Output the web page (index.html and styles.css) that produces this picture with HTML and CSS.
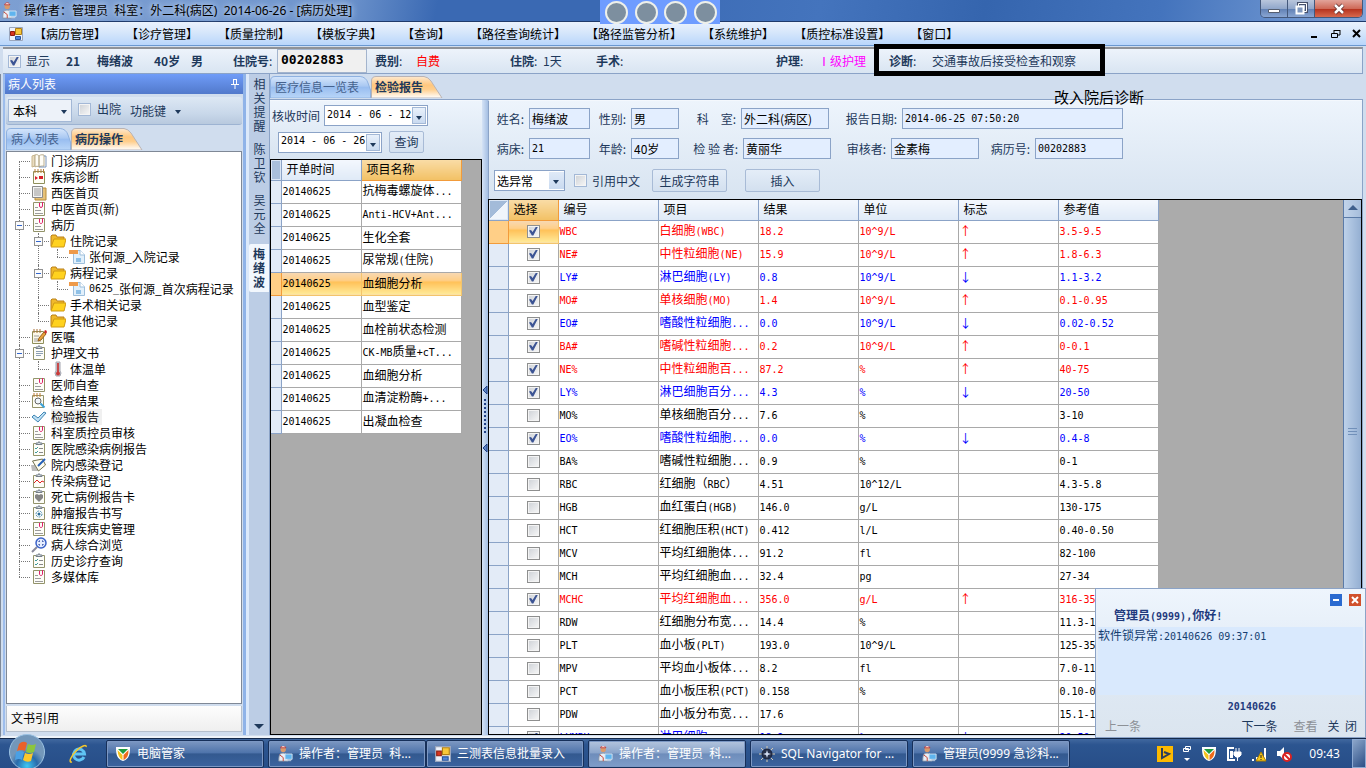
FILE: index.html
```html
<!DOCTYPE html>
<html lang="zh-CN">
<head>
    <meta charset="UTF-8">
    <meta name="viewport" content="width=device-width, initial-scale=1.0">
    <title>病历处理</title>
    <link rel="stylesheet" href="styles.css">
</head>
<body>
    <!-- 图标定义 -->
    <svg class="defs" aria-hidden="true">
        <symbol id="i-book" viewBox="0 0 16 16">
            <path d="M1 3l3-1v11l-3 1z" fill="#e9dcc0" stroke="#c9b68c"/><path d="M4 2c2-1 3 0 4 1v11c-1-1-3-1-4 0zM8 3c2-2 4-1 5-1v11c-2 0-4 0-5 1z" fill="#fffdf6" stroke="#b9ac8c"/><path d="M13 3h2v11H8" fill="none" stroke="#7a94b8"/>
        </symbol>
        <symbol id="i-note" viewBox="0 0 16 16">
            <path d="M2.500 2.500h11v12h-11z" fill="#fdfdf4" stroke="#8f8f5a"/><path d="M4 0v4M7 0v4M10 0v4M12.500 0v4" stroke="#b87a33"/><path d="M4 7l3 2-3 2zM8 7h4v3H8z" fill="#d8202a"/>
        </symbol>
        <symbol id="i-papers" viewBox="0 0 16 16">
            <path d="M4 3h11v12H4z" fill="#e6c27a" stroke="#b88d3a"/><path d="M1.500 1.500h10v11h-10z" fill="#f3f3f3" stroke="#8a8a8a"/><path d="M3 4h7M3 6h7M3 8h7M3 10h7" stroke="#9a9a9a"/>
        </symbol>
        <symbol id="i-doc" viewBox="0 0 16 16">
            <path d="M2.500 1.500h11v13h-11z" fill="#fdfdf8" stroke="#93936a"/><path d="M4 6.500h3M4 9.500h6M4 12.500h8" stroke="#9c9c9c"/><path d="M8.500 2v3c0 2 3 2 3 0V1" fill="none" stroke="#e0206c"/>
        </symbol>
        <symbol id="i-folder" viewBox="0 0 16 16">
            <path d="M1 13V3l1-1h4l1 2h7v3" fill="#f0b92c" stroke="#b9801a"/><path d="M1 14L4 6h12l-2 8z" fill="#ffd21f" stroke="#d09a14"/>
        </symbol>
        <symbol id="i-file" viewBox="0 0 16 16">
            <path d="M4.500 1.500h7l4 4v9h-11z" fill="#e2f0fb" stroke="#9dbedb"/><path d="M11 1v5h5" fill="#fff" stroke="#9dbedb"/><path d="M0 1h9v4H0z" fill="#ee9a4a"/><path d="M7 9h5v4H7z" fill="#8fc0e6"/>
        </symbol>
        <symbol id="i-pencil" viewBox="0 0 16 16">
            <path d="M1.500 2.500h11v12h-11z" fill="#fbf8e8" stroke="#8f8f5a"/><path d="M3 0v4M6 0v4M9 0v4" stroke="#a96f35"/><path d="M3 7h5M3 10h4M3 12h7" stroke="#9c9c9c"/><path d="M7 12l1-3 5-6 2 2-5 6z" fill="#e9a23c" stroke="#9b6420"/><path d="M13 2l2-1 1 2-1 2z" fill="#cc2222"/>
        </symbol>
        <symbol id="i-clip" viewBox="0 0 16 16">
            <path d="M2.500 2.500h11v12h-11z" fill="#fdfdf8" stroke="#93936a"/><path d="M5 3.500V2h2l1-1.500L9 2h2v1.500z" fill="#d5dde5" stroke="#77808a"/>
        </symbol>
        <symbol id="i-clip-text" viewBox="0 0 16 16">
            <use href="#i-clip"/><path d="M5 6.500h7M5 8.500h7M5 10.500h5" stroke="#8d9fb4"/>
        </symbol>
        <symbol id="i-clip-list" viewBox="0 0 16 16">
            <use href="#i-clip"/><path d="M4 7l1 1 2-2M4 11l1 1 2-2" fill="none" stroke="#3f9a9a"/><path d="M8 7.500h4M8 11.500h4" stroke="#888"/>
        </symbol>
        <symbol id="i-clip-chart" viewBox="0 0 16 16">
            <use href="#i-clip"/><path d="M3 10l3-3 3 3 2-2 2 1" fill="none" stroke="#e02020"/>
        </symbol>
        <symbol id="i-clip-heart" viewBox="0 0 16 16">
            <use href="#i-clip"/><path d="M4 6l2-1 2 1 2-1 2 1v3l-4 4-4-4z" fill="#858585"/>
        </symbol>
        <symbol id="i-clip-cell" viewBox="0 0 16 16">
            <use href="#i-clip"/><circle cx="8" cy="9" r="3" fill="#fff" stroke="#4b8eb0" stroke-dasharray="2 1"/><circle cx="8" cy="9" r="1.500" fill="#2b6e98"/>
        </symbol>
        <symbol id="i-thermo" viewBox="0 0 16 16">
            <path d="M6 1h4v9l1 2-1 3H6l-1-3 1-2z" fill="#c9cbd2" stroke="#a3a5b0"/><path d="M8 2v9" stroke="#c84a4a" stroke-width="2"/><circle cx="8" cy="12.500" r="2" fill="#c83a3a"/>
        </symbol>
        <symbol id="i-search" viewBox="0 0 16 16">
            <path d="M1.500 2.500h11v12h-11z" fill="#fdfdf4" stroke="#93936a"/><path d="M3 0v4M6 0v4M9 0v4" stroke="#c07a2a"/><circle cx="7" cy="8" r="3" fill="#f0f6fa" stroke="#666"/><path d="M9.500 10.500l4 4" stroke="#3aa0d8" stroke-width="2"/>
        </symbol>
        <symbol id="i-tick" viewBox="0 0 16 16">
            <path d="M1 8l2-2 4 3 6-6 2 1-8 9z" fill="#bfe0f4" stroke="#3f86b4"/>
        </symbol>
        <symbol id="i-sign" viewBox="0 0 16 16">
            <path d="M0 8h4l3 6H1z" fill="#bbb"/><path d="M1.500 4l10-2 3 6-7 6z" fill="#fffdf0" stroke="#6f6f4f"/><path d="M7 9l7-7" stroke="#2560b8" stroke-width="2"/>
        </symbol>
        <symbol id="i-zoom" viewBox="0 0 16 16">
            <path d="M1 15l5-5" stroke="#8a8a9a" stroke-width="2"/><circle cx="10" cy="6" r="5" fill="#e6eeff" stroke="#3a62c8" stroke-width="1.500"/><path d="M8 5V4h1M11 4h1v1M12 7v1h-1M9 8H8V7" fill="none" stroke="#223f9a"/>
        </symbol>
        <symbol id="i-form" viewBox="0 0 14 14">
            <path d="M.5.5h13v13H.5z" fill="#eef2fa" stroke="#9aa6bd"/><path d="M1.500 4.500h4v4h-4z" fill="#d8341e" stroke="#8e1c10"/><path d="M6.500 1.500h6v6h-6z" fill="#f8c73a" stroke="#b07f14"/><path d="M6.500 9.500h5v3h-5z" fill="#4f86dc" stroke="#2b559c"/>
        </symbol>
        <symbol id="i-nurse" viewBox="0 0 18 18">
            <circle cx="7" cy="4" r="3" fill="#d99a6c"/><path d="M4 2c1-3 5-3 6 0z" fill="#fff" stroke="#b33"/><path d="M2 17c0-7 1-9 5-9s5 3 5 9z" fill="#e8eef6" stroke="#8492a6"/><path d="M3 10l4 3v4" fill="none" stroke="#c63a2b"/><path d="M9 9h8v6H9z" fill="#5fb4ee" stroke="#d6e6f4"/><path d="M11 16.500h5" stroke="#cfdbe8"/>
        </symbol>
        <symbol id="i-shield" viewBox="0 0 16 16">
            <path d="M1 1h14c0 8-1 12-7 14C2 13 1 9 1 1z" fill="#fff"/><path d="M3 3h10l-5 5z" fill="#1f9c3c"/><path d="M2.500 4l5 5v5C4 12 3 9 2.500 4z" fill="#f6c21c"/><path d="M13.500 4l-5 5v5c4-2 5-5 5-10z" fill="#ef6a1a"/>
        </symbol>
        <symbol id="i-gear" viewBox="0 0 16 16">
            <path d="M8 0v16M0 8h16M2 2l12 12M14 2L2 14" stroke="#d8cbb0"/><circle cx="8" cy="8" r="5" fill="#26304a" stroke="#17203a"/><path d="M8 4l1 3 3 1-3 1-1 3-1-3-3-1 3-1z" fill="#cfdaf0"/>
        </symbol>
    </svg>

    <header class="titlebar">
        <svg class="icon18"><use href="#i-nurse"/></svg>
        <h1>操作者：管理员  科室：外二科(病区)  2014-06-26 - [病历处理]</h1>
        <div class="dots"><i></i><i></i><i></i><i></i></div>
        <div class="win-buttons">
            <button aria-label="最小化"><svg width="14" height="12"><path d="M1.500 6.500h11v3h-11z" fill="#fff" stroke="#555e70"/></svg></button>
            <button aria-label="还原"><svg width="14" height="14"><path d="M4.500 1.500h8v8h-8z" fill="none" stroke="#46506a" stroke-width="3"/><path d="M4.500 1.500h8v8h-8z" fill="none" stroke="#fff"/><path d="M2.500 4.500h7v7h-7z" fill="#7f97bd" stroke="#fff" stroke-width="2"/></svg></button>
            <button class="close" aria-label="关闭"><svg width="14" height="12"><path d="M3 2l8 8M11 2l-8 8" stroke="#5c2a2a" stroke-width="4"/><path d="M3 2l8 8M11 2l-8 8" stroke="#fff" stroke-width="2.500"/></svg></button>
        </div>
    </header>

    <nav class="menubar">
        <svg class="icon14"><use href="#i-form"/></svg>
        <a href="#">【病历管理】</a>
        <a href="#">【诊疗管理】</a>
        <a href="#">【质量控制】</a>
        <a href="#">【模板字典】</a>
        <a href="#">【查询】</a>
        <a href="#">【路径查询统计】</a>
        <a href="#">【路径监管分析】</a>
        <a href="#">【系统维护】</a>
        <a href="#">【质控标准设置】</a>
        <a href="#">【窗口】</a>
        <div class="mdi">
            <svg width="10" height="10"><path d="M1 8h6" stroke="#000" stroke-width="2"/></svg>
            <svg width="10" height="10"><path d="M3 1.500h6M3 1v3M9 1v5H7M.500 4.500h6v4h-6z" fill="none" stroke="#000"/></svg>
            <svg width="10" height="10"><path d="M1 1l7 7M8 1L1 8" stroke="#000" stroke-width="2"/></svg>
        </div>
    </nav>

    <section class="patient-bar">
        <label class="check"><input type="checkbox" checked>显示</label>
        <b>21</b>
        <b>梅绪波</b>
        <b>40岁</b>
        <b>男</b>
        <label for="admNo"><b>住院号</b>:</label>
        <input id="admNo" class="adm-no" type="text" value="00202883">
        <span class="cost"><b>费别</b>:</span>
        <span class="red">自费</span>
        <span><b>住院</b>:</span>
        <span>1天</span>
        <span><b>手术</b>:</span>
        <span><b>护理</b>:</span>
        <span class="pink">Ⅰ级护理</span>
        <span><b>诊断</b>:</span>
        <span>交通事故后接受检查和观察</span>
        <div class="mark-box"></div>
        <div class="mark-text">改入院后诊断</div>
    </section>

    <main class="workspace">
        <aside class="side">
            <div class="side-title">病人列表
                <svg width="10" height="12"><path d="M3.500 1v5M6.500 1v5M3 1.500h4M1 6.500h8M5 7v4" fill="none" stroke="#fff"/></svg>
            </div>
            <div class="side-tools">
                <select aria-label="科室范围"><option>本科</option></select>
                <label class="check"><input type="checkbox">出院</label>
                <button class="fn">功能键<i class="caret"></i></button>
            </div>
            <div class="tabs">
                <button class="tab t1"><svg viewBox="0 0 66 22" preserveAspectRatio="none"><path d="M.5 22V5Q.5.500 5 .500H55Q61 1 63 7L65.500 14V22z" fill="url(#gBlue)" stroke="#8db0e0"/></svg><span>病人列表</span></button>
                <button class="tab active"><svg viewBox="0 0 74 22" preserveAspectRatio="none"><path d="M.5 22V5Q.5.500 5 .500H53Q57 1 60 5L71 22z" fill="url(#gGold)" stroke="#b9b3b4"/></svg><span>病历操作</span></button>
            </div>
            <div class="tree">
                <ul>
                    <li><div class="node"><svg><use href="#i-book"/></svg>门诊病历</div></li>
                    <li><div class="node"><svg><use href="#i-note"/></svg>疾病诊断</div></li>
                    <li><div class="node"><svg><use href="#i-papers"/></svg>西医首页</div></li>
                    <li><div class="node"><svg><use href="#i-doc"/></svg>中医首页(新)</div></li>
                    <li>
                        <div class="node"><button class="fold" aria-label="折叠"></button><svg><use href="#i-doc"/></svg>病历</div>
                        <ul>
                            <li>
                                <div class="node"><button class="fold" aria-label="折叠"></button><svg><use href="#i-folder"/></svg>住院记录</div>
                                <ul><li><div class="node"><svg><use href="#i-file"/></svg>张何源_入院记录</div></li></ul>
                            </li>
                            <li>
                                <div class="node"><button class="fold" aria-label="折叠"></button><svg><use href="#i-folder"/></svg>病程记录</div>
                                <ul><li><div class="node"><svg><use href="#i-file"/></svg><small>0625_</small>张何源_首次病程记录</div></li></ul>
                            </li>
                            <li><div class="node"><svg><use href="#i-folder"/></svg>手术相关记录</div></li>
                            <li><div class="node"><svg><use href="#i-folder"/></svg>其他记录</div></li>
                        </ul>
                    </li>
                    <li><div class="node"><svg><use href="#i-pencil"/></svg>医嘱</div></li>
                    <li>
                        <div class="node"><button class="fold" aria-label="折叠"></button><svg><use href="#i-clip-text"/></svg>护理文书</div>
                        <ul><li><div class="node"><svg><use href="#i-thermo"/></svg>体温单</div></li></ul>
                    </li>
                    <li><div class="node"><svg><use href="#i-doc"/></svg>医师自查</div></li>
                    <li><div class="node"><svg><use href="#i-search"/></svg>检查结果</div></li>
                    <li><div class="node"><svg><use href="#i-tick"/></svg><span class="current">检验报告</span></div></li>
                    <li><div class="node"><svg><use href="#i-doc"/></svg>科室质控员审核</div></li>
                    <li><div class="node"><svg><use href="#i-clip-list"/></svg>医院感染病例报告</div></li>
                    <li><div class="node"><svg><use href="#i-sign"/></svg>院内感染登记</div></li>
                    <li><div class="node"><svg><use href="#i-clip-chart"/></svg>传染病登记</div></li>
                    <li><div class="node"><svg><use href="#i-clip-heart"/></svg>死亡病例报告卡</div></li>
                    <li><div class="node"><svg><use href="#i-clip-cell"/></svg>肿瘤报告书写</div></li>
                    <li><div class="node"><svg><use href="#i-doc"/></svg>既往疾病史管理</div></li>
                    <li><div class="node"><svg><use href="#i-zoom"/></svg>病人综合浏览</div></li>
                    <li><div class="node"><svg><use href="#i-clip-list"/></svg>历史诊疗查询</div></li>
                    <li><div class="node"><svg><use href="#i-doc"/></svg>多媒体库</div></li>
                </ul>
            </div>
            <div class="side-foot">文书引用</div>
        </aside>

        <div class="vtabs">
            <button>相关提醒</button>
            <button>陈卫钦</button>
            <button>吴元全</button>
            <button class="active">梅绪波</button>
            <i class="caret big"></i>
        </div>

        <section class="content">
            <div class="tabs">
                <button class="tab t2"><svg viewBox="0 0 102 22" preserveAspectRatio="none"><path d="M.5 22V5Q.5.500 5 .500H91Q97 1 99 7L101.500 14V22z" fill="url(#gBlue)" stroke="#8db0e0"/></svg><span>医疗信息一览表</span></button>
                <button class="tab active"><svg viewBox="0 0 74 22" preserveAspectRatio="none"><path d="M.5 22V5Q.5.500 5 .500H53Q57 1 60 5L71 22z" fill="url(#gGold)" stroke="#b9b3b4"/></svg><span>检验报告</span></button>
            </div>
            <div class="split">
                <div class="orders">
                    <form class="query">
                        <label for="d1">核收时间</label>
                        <span class="date"><input id="d1" type="text" value="2014 - 06 - 12"><button type="button" aria-label="选择日期"><i class="caret"></i></button></span>
                        <span class="date second"><input aria-label="截止时间" type="text" value="2014 - 06 - 26"><button type="button" aria-label="选择日期"><i class="caret"></i></button></span>
                        <button type="button" class="btn">查询</button>
                    </form>
                    <div class="grid-box">
                        <table class="grid order-grid">
                            <colgroup><col class="g1"><col class="c-date"><col class="c100"></colgroup>
                            <thead><tr><th class="corner"></th><th>开单时间</th><th class="hot">项目名称</th></tr></thead>
                            <tbody>
                                <tr><th></th><td><small>20140625</small></td><td>抗梅毒螺旋体<small>...</small></td></tr>
                                <tr><th></th><td><small>20140625</small></td><td><small>Anti-HCV+Ant...</small></td></tr>
                                <tr><th></th><td><small>20140625</small></td><td>生化全套</td></tr>
                                <tr><th></th><td><small>20140625</small></td><td>尿常规<small>(</small>住院<small>)</small></td></tr>
                                <tr class="selected"><th></th><td><small>20140625</small></td><td>血细胞分析</td></tr>
                                <tr><th></th><td><small>20140625</small></td><td>血型鉴定</td></tr>
                                <tr><th></th><td><small>20140625</small></td><td>血栓前状态检测</td></tr>
                                <tr><th></th><td><small>20140625</small></td><td><small>CK-MB</small>质量<small>+cT...</small></td></tr>
                                <tr><th></th><td><small>20140625</small></td><td>血细胞分析</td></tr>
                                <tr><th></th><td><small>20140625</small></td><td>血清淀粉酶<small>+...</small></td></tr>
                                <tr><th></th><td><small>20140625</small></td><td>出凝血检查</td></tr>
                            </tbody>
                        </table>
                    </div>
                </div>

                <div class="splitter"><svg width="6" height="70"><path d="M5 3L1 7l4 4zM5 61l-4 4 4 4z" fill="#5f86c6" stroke="#1f3f86"/><path d="M3 16v36" stroke="#1f3f86" stroke-width="2" stroke-dasharray="2 2"/></svg></div>

                <div class="report">
                    <form class="info">
                        <div class="row row1">
                            <label for="f1">姓名:</label><input id="f1" type="text" value="梅绪波">
                            <label for="f2">性别:</label><input id="f2" type="text" value="男">
                            <label for="f3">科　室:</label><input id="f3" type="text" value="外二科(病区)">
                            <label for="f4">报告日期:</label><input id="f4" class="num" type="text" value="2014-06-25 07:50:20">
                        </div>
                        <div class="row row2">
                            <label for="f5">病床:</label><input id="f5" class="num" type="text" value="21">
                            <label for="f6">年龄:</label><input id="f6" type="text" value="40岁">
                            <label for="f7">检 验 者:</label><input id="f7" type="text" value="黄丽华">
                            <label for="f8">审核者:</label><input id="f8" type="text" value="金素梅">
                            <label for="f9">病历号:</label><input id="f9" class="num" type="text" value="00202883">
                        </div>
                        <div class="row row3">
                            <select aria-label="选择方式"><option>选异常</option></select>
                            <label class="check"><input type="checkbox">引用中文</label>
                            <button type="button" class="btn wide">生成字符串</button>
                            <button type="button" class="btn wide">插入</button>
                        </div>
                    </form>
                    <div class="grid-box">
                        <table class="grid">
                            <colgroup><col class="g2"><col class="c-sel"><col class="c100"><col class="c100"><col class="c100"><col class="c100"><col class="c100"><col class="c100"></colgroup>
                            <thead><tr><th class="corner all"></th><th class="hot">选择</th><th>编号</th><th>项目</th><th>结果</th><th>单位</th><th>标志</th><th>参考值</th></tr></thead>
                            <tbody>
                                <tr class="high first"><th></th><td><input type="checkbox" aria-label="WBC" checked></td><td><small>WBC</small></td><td>白细胞<small>(WBC)</small></td><td><small>18.2</small></td><td><small>10^9/L</small></td><td>↑</td><td><small>3.5-9.5</small></td></tr>
                                <tr class="high"><th></th><td><input type="checkbox" aria-label="NE#" checked></td><td><small>NE#</small></td><td>中性粒细胞<small>(NE)</small></td><td><small>15.9</small></td><td><small>10^9/L</small></td><td>↑</td><td><small>1.8-6.3</small></td></tr>
                                <tr class="low"><th></th><td><input type="checkbox" aria-label="LY#" checked></td><td><small>LY#</small></td><td>淋巴细胞<small>(LY)</small></td><td><small>0.8</small></td><td><small>10^9/L</small></td><td>↓</td><td><small>1.1-3.2</small></td></tr>
                                <tr class="high"><th></th><td><input type="checkbox" aria-label="MO#" checked></td><td><small>MO#</small></td><td>单核细胞<small>(MO)</small></td><td><small>1.4</small></td><td><small>10^9/L</small></td><td>↑</td><td><small>0.1-0.95</small></td></tr>
                                <tr class="low"><th></th><td><input type="checkbox" aria-label="EO#" checked></td><td><small>EO#</small></td><td>嗜酸性粒细胞<small>...</small></td><td><small>0.0</small></td><td><small>10^9/L</small></td><td>↓</td><td><small>0.02-0.52</small></td></tr>
                                <tr class="high"><th></th><td><input type="checkbox" aria-label="BA#" checked></td><td><small>BA#</small></td><td>嗜碱性粒细胞<small>...</small></td><td><small>0.2</small></td><td><small>10^9/L</small></td><td>↑</td><td><small>0-0.1</small></td></tr>
                                <tr class="high"><th></th><td><input type="checkbox" aria-label="NE%" checked></td><td><small>NE%</small></td><td>中性粒细胞百<small>...</small></td><td><small>87.2</small></td><td><small>%</small></td><td>↑</td><td><small>40-75</small></td></tr>
                                <tr class="low"><th></th><td><input type="checkbox" aria-label="LY%" checked></td><td><small>LY%</small></td><td>淋巴细胞百分<small>...</small></td><td><small>4.3</small></td><td><small>%</small></td><td>↓</td><td><small>20-50</small></td></tr>
                                <tr><th></th><td><input type="checkbox" aria-label="MO%"></td><td><small>MO%</small></td><td>单核细胞百分<small>...</small></td><td><small>7.6</small></td><td><small>%</small></td><td></td><td><small>3-10</small></td></tr>
                                <tr class="low"><th></th><td><input type="checkbox" aria-label="EO%" checked></td><td><small>EO%</small></td><td>嗜酸性粒细胞<small>...</small></td><td><small>0.0</small></td><td><small>%</small></td><td>↓</td><td><small>0.4-8</small></td></tr>
                                <tr><th></th><td><input type="checkbox" aria-label="BA%"></td><td><small>BA%</small></td><td>嗜碱性粒细胞<small>...</small></td><td><small>0.9</small></td><td><small>%</small></td><td></td><td><small>0-1</small></td></tr>
                                <tr><th></th><td><input type="checkbox" aria-label="RBC"></td><td><small>RBC</small></td><td>红细胞（<small>RBC</small>）</td><td><small>4.51</small></td><td><small>10^12/L</small></td><td></td><td><small>4.3-5.8</small></td></tr>
                                <tr><th></th><td><input type="checkbox" aria-label="HGB"></td><td><small>HGB</small></td><td>血红蛋白<small>(HGB)</small></td><td><small>146.0</small></td><td><small>g/L</small></td><td></td><td><small>130-175</small></td></tr>
                                <tr><th></th><td><input type="checkbox" aria-label="HCT"></td><td><small>HCT</small></td><td>红细胞压积<small>(HCT)</small></td><td><small>0.412</small></td><td><small>l/L</small></td><td></td><td><small>0.40-0.50</small></td></tr>
                                <tr><th></th><td><input type="checkbox" aria-label="MCV"></td><td><small>MCV</small></td><td>平均红细胞体<small>...</small></td><td><small>91.2</small></td><td><small>fl</small></td><td></td><td><small>82-100</small></td></tr>
                                <tr><th></th><td><input type="checkbox" aria-label="MCH"></td><td><small>MCH</small></td><td>平均红细胞血<small>...</small></td><td><small>32.4</small></td><td><small>pg</small></td><td></td><td><small>27-34</small></td></tr>
                                <tr class="high"><th></th><td><input type="checkbox" aria-label="MCHC" checked></td><td><small>MCHC</small></td><td>平均红细胞血<small>...</small></td><td><small>356.0</small></td><td><small>g/L</small></td><td>↑</td><td><small>316-354</small></td></tr>
                                <tr><th></th><td><input type="checkbox" aria-label="RDW"></td><td><small>RDW</small></td><td>红细胞分布宽<small>...</small></td><td><small>14.4</small></td><td><small>%</small></td><td></td><td><small>11.3-14.7</small></td></tr>
                                <tr><th></th><td><input type="checkbox" aria-label="PLT"></td><td><small>PLT</small></td><td>血小板<small>(PLT)</small></td><td><small>193.0</small></td><td><small>10^9/L</small></td><td></td><td><small>125-350</small></td></tr>
                                <tr><th></th><td><input type="checkbox" aria-label="MPV"></td><td><small>MPV</small></td><td>平均血小板体<small>...</small></td><td><small>8.2</small></td><td><small>fl</small></td><td></td><td><small>7.0-11.0</small></td></tr>
                                <tr><th></th><td><input type="checkbox" aria-label="PCT"></td><td><small>PCT</small></td><td>血小板压积<small>(PCT)</small></td><td><small>0.158</small></td><td><small>%</small></td><td></td><td><small>0.10-0.28</small></td></tr>
                                <tr><th></th><td><input type="checkbox" aria-label="PDW"></td><td><small>PDW</small></td><td>血小板分布宽<small>...</small></td><td><small>17.6</small></td><td></td><td></td><td><small>15.1-18.1</small></td></tr>
                                <tr class="low"><th></th><td><input type="checkbox" aria-label="LYMPH" checked></td><td><small>LYMPH</small></td><td>淋巴细胞<small>...</small></td><td><small>18.2</small></td><td><small>%</small></td><td>↓</td><td><small>20-50</small></td></tr>
                            </tbody>
                        </table>
                        <div class="scroll"><i class="up"></i><div class="thumb"></div></div>
                    </div>
                </div>
            </div>
        </section>
    </main>

    <footer class="taskbar">
        <button class="start" aria-label="开始"><svg width="38" height="38" viewBox="0 0 38 38"><circle cx="19" cy="19" r="17.500" fill="url(#gOrb)" stroke="#9cc3e4"/><path d="M11 11q4-4 8-1l-2 8q-4-2-8 0z" fill="#e9622a"/><path d="M20 11q4 2 8 0l-2 8q-4 2-8 0z" fill="#8cc63e"/><path d="M8 19q4-2 8 0l-2 8q-3-2-7 0z" fill="#4aa0e4"/><path d="M17 20q4 2 8 0l-2 8q-4 2-8-1z" fill="#fcc72c"/></svg></button>
        <button class="ie" aria-label="浏览器"><svg width="22" height="22" viewBox="0 0 22 22"><path d="M16 14a5.500 5.500 0 1 1 .5-3H7" fill="none" stroke="#5fc4f4" stroke-width="3"/><path d="M4 19c-4 1-1-6 4-11s11-7 10-4" fill="none" stroke="#f6c82a" stroke-width="1.500"/></svg></button>
        <button class="task"><svg><use href="#i-shield"/></svg>电脑管家</button>
        <button class="task glued"><svg><use href="#i-nurse"/></svg>操作者：管理员  科...</button>
        <button class="task"><svg><use href="#i-form"/></svg>三测表信息批量录入</button>
        <button class="task on"><svg><use href="#i-nurse"/></svg>操作者：管理员  科...</button>
        <button class="task"><svg><use href="#i-gear"/></svg>SQL Navigator for ...</button>
        <button class="task"><svg><use href="#i-nurse"/></svg>管理员(9999 急诊科...</button>
        <div class="tray">
            <svg width="16" height="16"><path d="M0 0h16v16H0z" fill="#fcb900"/><path d="M5 2v10l7-4-5-2" fill="none" stroke="#2b3d5c" stroke-width="2"/></svg>
            <svg width="10" height="18"><path d="M3.500 1.500h5v3h-5zM1.500 3.500h5v3h-5z" fill="#2c5590" stroke="#fff"/><path d="M2 13h6l-3 3z" fill="#fff"/></svg>
            <svg width="16" height="16"><use href="#i-shield"/></svg>
            <svg width="16" height="16" viewBox="0 0 16 16"><path d="M8 2H2v12h7" fill="none" stroke="#fff" stroke-width="2"/><path d="M4 5h3v7H4z" fill="#fff"/><path d="M8 6h7v3l-2 2h-3L8 9zM10 2v4M13 2v4M11.500 11v4" fill="#fff" stroke="#fff"/></svg>
            <svg width="16" height="16" viewBox="0 0 16 16"><path d="M1 15v-2h2v2zM5 15v-4h2v4zM9 15V7h2v8zM13 15V2h2v13z" fill="#fff"/><path d="M10 6l5 9H5z" fill="#f8c81c" stroke="#a67c00"/><path d="M10 9v3M10 13v1" stroke="#222"/></svg>
            <svg width="16" height="16" viewBox="0 0 16 16"><path d="M1 5h3l4-4v13l-4-4H1z" fill="#fff"/><circle cx="11" cy="11" r="4" fill="#fff" stroke="#d92222" stroke-width="2"/><path d="M8 8l6 6" stroke="#d92222" stroke-width="2"/></svg>
            <time>09:43</time>
            <i class="peek"></i>
        </div>
    </footer>

    <!-- 右下角消息提示 -->
    <aside class="notice">
        <div class="notice-head">
            <h2>管理员<small>(9999),</small>你好<small>!</small></h2>
            <button class="n-min" aria-label="最小化"></button>
            <button class="n-close" aria-label="关闭"><svg width="8" height="8"><path d="M1 1l6 6M7 1L1 7" stroke="#fff" stroke-width="2"/></svg></button>
        </div>
        <p class="notice-body">软件锁异常<small>:20140626 09:37:01</small></p>
        <strong><small>20140626</small></strong>
        <div class="notice-foot">
            <button disabled>上一条</button><button class="next">下一条</button><button disabled>查看</button><button>关&nbsp; 闭</button>
        </div>
    </aside>

    <svg class="defs" aria-hidden="true">
        <linearGradient id="gBlue" x2="0" y2="1"><stop offset="0" stop-color="#d6e6fb"/><stop offset=".45" stop-color="#a9c8f2"/><stop offset=".5" stop-color="#98bdf0"/><stop offset="1" stop-color="#b9d6f8"/></linearGradient>
        <linearGradient id="gGold" x2="0" y2="1"><stop offset="0" stop-color="#fde9d0"/><stop offset=".4" stop-color="#ffc77e"/><stop offset=".6" stop-color="#ffce8c"/><stop offset="1" stop-color="#fff"/></linearGradient>
        <radialGradient id="gOrb" cy=".9"><stop offset="0" stop-color="#3fc8f4"/><stop offset=".6" stop-color="#2a6bab"/><stop offset="1" stop-color="#7397ba"/></radialGradient>
    </svg>
</body>
</html>
```

FILE: styles.css
```css
* {
    box-sizing: border-box;
}
body {
    margin: 0;
    height: 100vh;
    display: flex;
    flex-direction: column;
    overflow: hidden;
    position: relative;
    font-family: "Noto Sans CJK SC", sans-serif;
    font-size: 12px;
    line-height: 16px;
    color: #1e395b;
    background-color: #d0ddee;
}
button, input, select {
    font: inherit;
    color: inherit;
    margin: 0;
    padding: 0;
    border: 0;
    border-radius: 0;
    background: none;
    outline: none;
}
h1, h2, p, ul {
    margin: 0;
    padding: 0;
    font-size: 12px;
}
svg {
    display: block;
    flex: none;
}
small, .num {
    font-family: "DejaVu Sans Mono", monospace;
    font-size: 10px;
}
.defs {
    position: absolute;
    width: 0;
    height: 0;
}
.red { color: #f00; }
.pink { color: #f0f; }
.caret {
    display: inline-block;
    border: 3px solid transparent;
    border-top: 4px solid #1e395b;
    border-bottom: 0;
}

/* 标题栏 */
.titlebar {
    flex: none;
    height: 22px;
    display: flex;
    align-items: center;
    padding-left: 1px;
    border-bottom: 1px solid #1f3a6b;
    background: linear-gradient(100deg, #7d9fd2, #6f95cd 25%, #3a69b3 32%, #3a69b3 45%, #4474bd 60%, #3565ae 72%, #4474bd 85%, #7fa3d8);
    position: relative;
}
.icon18 {
    width: 16px;
    height: 18px;
}
.titlebar h1 {
    margin-left: 7px;
    color: #000;
    font-family: "Noto Sans", "Noto Sans CJK SC", sans-serif;
    font-weight: normal;
    white-space: pre;
    text-shadow: 0 0 6px #c4d6f0, 0 0 6px #c4d6f0;
}
.dots {
    position: absolute;
    left: 600px;
    top: 0;
    z-index: 2;
    width: 120px;
    height: 24px;
    display: flex;
    justify-content: space-around;
    align-items: center;
    padding-left: 2px;
    background-color: #6e9cff;
}
.dots i {
    width: 23px;
    height: 23px;
    border-radius: 50%;
    border: 2px solid #eef0ea;
    background-color: #7d8f9f;
}
.win-buttons {
    margin-left: auto;
    margin-right: 3px;
    align-self: flex-start;
    display: flex;
    height: 18px;
    border: 1px solid #43587c;
    border-top: 0;
    border-radius: 0 0 5px 5px;
    overflow: hidden;
}
.win-buttons button {
    width: 27px;
    display: flex;
    align-items: center;
    justify-content: center;
    border-right: 1px solid #43587c;
    background: linear-gradient(#b9c6dc, #91a7cb 50%, #5f7fb3 51%, #8aa6d3);
}
.win-buttons .close {
    width: 47px;
    border: 0;
    background: linear-gradient(#e2a49a, #cf6a58 50%, #b3301c 51%, #d8694e);
}

/* 菜单 */
.menubar {
    flex: none;
    height: 24px;
    display: flex;
    align-items: center;
    padding: 0 4px 0 9px;
    border-bottom: 1px solid #6a98d0;
    background: linear-gradient(#eaf2fd, #d9e8fb 40%, #b9d6fb);
}
.icon14 {
    width: 14px;
    height: 14px;
    margin-right: 11px;
}
.menubar a {
    margin-right: 20px;
    color: #000;
    text-decoration: none;
}
.mdi {
    margin-left: auto;
    display: flex;
    gap: 11px;
}

/* 病人信息条 */
.patient-bar {
    flex: none;
    height: 27px;
    display: grid;
    grid-template-columns: 58px 31px 57px 37px 42px 44px 90px 49px 94px 33px 53px 180px 42px 71px 43px auto;
    align-items: center;
    margin: 1px 3px 0;
    padding: 3px 0 0 5px;
    position: relative;
    border-top: 2px solid #8f9297;
    border-bottom: 1px solid #8ba3c7;
    border-right: 1px solid #8ba3c7;
    background: linear-gradient(#edf3fb, #d9e5f2);
    white-space: nowrap;
}
.patient-bar > .cost {
    padding-left: 8px;
}
.patient-bar > * {
    margin-top: -3px;
}
.adm-no {
    width: 90px;
    height: 24px;
    padding: 0 0 3px 3px;
    border: 1px solid #a3b4cd;
    background-color: #f0f0f0;
    color: #000;
    font-family: "DejaVu Sans Mono", monospace;
    font-size: 13px;
    font-weight: bold;
}
.mark-box {
    position: absolute;
    left: 871px;
    top: -2px;
    z-index: 3;
    width: 231px;
    height: 32px;
    border: 5px solid #000;
}
.mark-text {
    position: absolute;
    left: 1051px;
    top: 43px;
    z-index: 3;
    color: #000;
    font-size: 15px;
}
.check {
    display: flex;
    align-items: center;
    gap: 5px;
}
input[type="checkbox"] {
    appearance: none;
    width: 13px;
    height: 13px;
    flex: none;
    position: relative;
    border: 1px solid #8e8f8f;
    background: linear-gradient(135deg, #cdd1d6, #f8f8f8);
    box-shadow: inset 0 0 0 1px #f4f4f4;
}
.check input[type="checkbox"] {
    border-color: #a3b8d6;
}
input[type="checkbox"]:checked::after {
    content: "";
    position: absolute;
    left: 1px;
    top: 1px;
    width: 9px;
    height: 9px;
    background-color: #3c5494;
    clip-path: polygon(0 45%, 22% 38%, 40% 62%, 78% 0, 100% 0, 48% 100%, 32% 100%);
}

/* 主工作区 */
.workspace {
    flex: 1;
    min-height: 0;
    display: flex;
    padding: 0 3px 1px 2px;
    border-left: 1px solid #7f8a9a;
    border-bottom: 2px solid #eef3f9;
}
.side {
    width: 243px;
    flex: none;
    display: flex;
    flex-direction: column;
    padding: 0 1px 3px;
    background-color: #d0ddee;
    border-right: 3px solid #8fb3e8;
    border-left: 2px solid #9dbdec;
}
.side-title {
    flex: none;
    height: 20px;
    display: flex;
    align-items: center;
    justify-content: space-between;
    margin: 0 -1px;
    padding: 0 3px;
    color: #fff;
    background: linear-gradient(#6f9cf8, #5179cb);
}
.side-tools {
    flex: none;
    height: 28px;
    display: flex;
    align-items: center;
    margin: 3px 0 1px;
    padding-left: 2px;
    border-radius: 3px;
    border-bottom: 1px solid #9db3d2;
    background: linear-gradient(#dde8f4, #c9d8ea 60%, #b8c9de);
}
select {
    appearance: none;
    color: #000;
    border: 1px solid #a3b8d6;
}
.side-tools select {
    width: 64px;
    height: 23px;
    padding-left: 4px;
    background: url("data:image/svg+xml,%3Csvg xmlns='http://www.w3.org/2000/svg' width='6' height='4'%3E%3Cpath d='M0 0h6L3 4z' fill='%231e395b'/%3E%3C/svg%3E") 52px 10px no-repeat #edf2f9;
}
.side-tools .check {
    margin: -3px 9px 0 6px;
    gap: 6px;
}
.fn .caret {
    margin: 0 0 2px 9px;
}
.tabs {
    flex: none;
    height: 24px;
    display: flex;
    align-items: flex-end;
}
.tab {
    position: relative;
    width: 74px;
    height: 22px;
    text-align: left;
    color: #45628e;
}
.tab svg {
    position: absolute;
    left: 0;
    top: 0;
    width: 100%;
    height: 100%;
}
.tab span {
    position: relative;
    padding-left: 5px;
}
.t1 { width: 65px; }
.t2 { width: 101px; }
.tab.active {
    color: #1e395b;
    font-weight: bold;
}
.tab.active span {
    padding-left: 4px;
}
.tree {
    flex: 1;
    min-height: 0;
    overflow: hidden;
    margin-top: 1px;
    padding-top: 1px;
    border: 1px solid #7f8896;
    background-color: #fff;
    color: #000;
}
.tree ul {
    list-style: none;
}
.tree li {
    position: relative;
}
.tree li > ul {
    margin-left: 19px;
}
.tree li::before {
    content: "";
    position: absolute;
    left: 12px;
    top: 0;
    height: 100%;
    border-left: 1px dotted #777;
}
.tree > ul > li:first-child::before {
    top: 8px;
    height: 8px;
}
.tree li:last-child::before {
    height: 8px;
}
.node {
    position: relative;
    height: 16px;
    display: flex;
    align-items: center;
    padding-left: 24px;
    white-space: nowrap;
}
.node::before {
    content: "";
    position: absolute;
    left: 12px;
    top: 8px;
    width: 11px;
    border-top: 1px dotted #777;
}
.node svg {
    width: 16px;
    height: 16px;
    margin-right: 4px;
}
.fold {
    position: absolute;
    left: 8px;
    top: 4px;
    width: 9px;
    height: 9px;
    border: 1px solid #919191;
    background: linear-gradient(#36c, #36c) center / 5px 1px no-repeat #fbfbfb;
}
.current {
    background-color: #f0f0f0;
    padding-right: 3px;
}
.side-foot {
    flex: none;
    height: 26px;
    margin-top: 2px;
    padding: 4px;
    color: #000;
    border: 1px solid #b5bfcc;
    border-top: 0;
    background: linear-gradient(#fdfdfd, #efefef);
}

/* 竖排页签 */
.vtabs {
    width: 24px;
    flex: none;
    display: flex;
    flex-direction: column;
    padding: 3px 2px 0 0;
    background: linear-gradient(90deg, #dce9fa 3px, #bccde5 3px);
    border-right: 1px solid #8ba3c7;
}
.vtabs button {
    width: 20px;
    margin: 0 0 9px 3px;
    padding: 0 3px 0 4px;
    line-height: 14px;
    word-break: break-all;
}
.vtabs .active {
    padding: 3px 4px;
    border-radius: 2px 0 0 2px;
    background-color: #f2f7fd;
    font-weight: bold;
}
.caret.big {
    margin: auto 0 6px 8px;
    width: 0;
    border-width: 5px 5px 0;
}

/* 右侧内容 */
.content {
    flex: 1;
    min-width: 0;
    display: flex;
    flex-direction: column;
}
.split {
    flex: 1;
    min-height: 0;
    display: flex;
    margin-top: 1px;
    border-top: 1px solid #8ba3c7;
    border-right: 1px solid #8ba3c7;
}
.orders {
    width: 212px;
    flex: none;
    display: flex;
    flex-direction: column;
}
.query {
    flex: none;
    height: 59px;
    display: flex;
    flex-wrap: wrap;
    align-content: flex-start;
    align-items: center;
    gap: 5px 4px;
    padding: 4px 0 0 2px;
    border-top: 1px solid #f4f8fd;
    background: linear-gradient(#edf4fc, #d8e4f1);
}
.date {
    width: 104px;
    height: 21px;
    display: flex;
    padding: 1px;
    border: 1px solid #8ba3c7;
    background-color: #fff;
}
.date.second {
    margin-left: 6px;
}
.date input {
    flex: 1;
    min-width: 0;
    padding: 0 0 2px 1px;
    color: #000;
    font-family: "DejaVu Sans Mono", monospace;
    font-size: 10px;
}
.date button {
    width: 14px;
    border: 1px solid #a3b8d6;
    background: linear-gradient(#e9f1fb, #c9daf0);
    line-height: 8px;
}
.btn {
    width: 35px;
    height: 22px;
    border: 1px solid #a8bbd6;
    border-radius: 2px;
    background: linear-gradient(#e4edf8, #d3e0ef);
}
.query .btn {
    margin-left: 3px;
}
.grid-box {
    flex: 1;
    min-height: 0;
    display: flex;
    justify-content: space-between;
    align-items: flex-start;
    overflow: hidden;
    border: 1px solid #000;
    background-color: #ababab;
}
.grid {
    flex: none;
    table-layout: fixed;
    border-collapse: collapse;
    width: 669px;
    background-color: #fff;
    color: #000;
}
.order-grid {
    width: 190px;
}
.g1 { width: 10px; }
.g2 { width: 19px; }
.c-date { width: 80px; }
.c-sel { width: 50px; }
.c100 { width: 100px; }
.grid th, .grid td {
    height: 23px;
    padding: 0 0 1px 1px;
    border: 1px solid #a9a9a9;
    border-top: 0;
    border-left: 0;
    text-align: left;
    white-space: nowrap;
    overflow: hidden;
    font-weight: normal;
}
.grid thead th {
    height: 20px;
    padding-left: 5px;
    border-color: #8ba3c7;
    background: linear-gradient(#f3f7fd, #dfeaf7);
}
.grid tbody th {
    border-color: #8ba3c7;
    background-color: #e3ebf7;
}
.grid thead .corner {
    background: #a9bfdb;
    box-shadow: inset 0 0 0 1px #dce7f5;
}
.grid thead .all {
    background: linear-gradient(135deg, #a3bbd9 50%, #f0f5fb 50%);
}
.grid thead .hot {
    border-color: #f29b3a;
    background: linear-gradient(#f9dca6, #f2c165);
}
.grid input {
    display: block;
    margin: 0 auto;
}
.high { color: #f00; }
.low { color: #00f; }
.selected td, .first td:nth-child(2) {
    border-color: #f3c46c;
    background: linear-gradient(#f7d9b5, #ffce85 38%, #ffc057 42%, #ffeb9a);
}
.grid .selected th, .grid .first th {
    border-color: #f29b3a;
    background-color: #ffcf87;
}
.splitter {
    width: 6px;
    flex: none;
    display: flex;
    align-items: center;
    background: linear-gradient(90deg, #d5e3f6, #a5bfe3);
}
.report {
    flex: 1;
    min-width: 0;
    display: flex;
    flex-direction: column;
}
.info {
    flex: none;
    height: 99px;
    padding: 7px 0 0 5px;
    border-left: 1px solid #8ba3c7;
    border-top: 1px solid #f4f8fd;
    background: linear-gradient(#edf4fc, #d8e4f1);
}
.row {
    display: grid;
    align-items: center;
    margin-bottom: 9px;
}
.row1 { grid-template-columns: 35px 61px 41px 48px 62px 88px 73px 221px; }
.row2 { grid-template-columns: 35px 61px 41px 48px 64px 88px 60px 88px 56px 88px; }
.row3 {
    grid-template-columns: 71px 69px 75px 75px;
    column-gap: 9px;
    margin-top: 10px;
}
.row > label:not(.check) {
    text-align: right;
    padding-right: 5px;
    white-space: nowrap;
}
.row input[type="text"] {
    width: 100%;
    height: 21px;
    padding: 0 0 1px 2px;
    border: 1px solid #8ba3c7;
    background-color: #e3eeff;
    color: #000;
}
.row3 select {
    height: 21px;
    padding-left: 2px;
    border-color: #8ba3c7;
    background: url("data:image/svg+xml,%3Csvg xmlns='http://www.w3.org/2000/svg' width='6' height='4'%3E%3Cpath d='M0 0h6L3 4z' fill='%231e395b'/%3E%3C/svg%3E") 58px 9px no-repeat, linear-gradient(#e0eaf8, #c9daf0) 54px 1px / 15px 17px no-repeat #fff;
}
.btn.wide {
    width: 75px;
    height: 23px;
}
.row3 .btn:last-child {
    margin-left: 9px;
}
.scroll {
    width: 18px;
    align-self: stretch;
    display: flex;
    flex-direction: column;
    border-left: 1px solid #5b7ba8;
    background: linear-gradient(90deg, #c2d4eb, #a6bddb);
}
.up {
    flex: none;
    height: 18px;
    border-bottom: 1px solid #5b7ba8;
}
.up::before {
    content: "";
    display: block;
    width: 0;
    margin: 5px auto;
    border: 5px solid transparent;
    border-top: 0;
    border-bottom: 5px solid #3f5f8c;
}
.thumb {
    flex: 0 0 440px;
    background: linear-gradient(#7190b9, #7190b9) center 210px / 9px 1px no-repeat, linear-gradient(#7190b9, #7190b9) center 213px / 9px 1px no-repeat, linear-gradient(#7190b9, #7190b9) center 216px / 9px 1px no-repeat, linear-gradient(90deg, #bdd1ea, #94afd2);
}

/* 任务栏 */
.taskbar {
    flex: none;
    height: 30px;
    display: flex;
    align-items: center;
    gap: 4px;
    color: #fff;
    font-family: "Noto Sans", "Noto Sans CJK SC", sans-serif;
    border-top: 1px solid #14294a;
    background: linear-gradient(#41689f, #2c5590 20%, #274e88);
}
.start {
    width: 38px;
    height: 38px;
    align-self: flex-start;
    position: relative;
    z-index: 2;
    margin: -6px 12px 0 8px;
}
.ie {
    width: 22px;
    margin: 0 12px 0 6px;
}
.start, .ie {
    flex: none;
}
.task {
    flex: 0 1 158px;
    min-width: 0;
    height: 28px;
    display: flex;
    align-items: center;
    gap: 6px;
    padding: 0 8px;
    overflow: hidden;
    white-space: pre;
    border: 1px solid #17305a;
    border-radius: 2px;
    box-shadow: inset 0 0 0 1px #7c98c4;
    background: linear-gradient(#7d98c2, #4f74ab 45%, #33598f 50%, #3b639f);
}
.task svg {
    width: 16px;
    height: 16px;
}
.task.glued {
    margin-right: -4px;
}
.task.on {
    background: linear-gradient(#b4c5de, #8ba5cb 45%, #6e8dbb 50%, #7f9dc9);
}
.tray {
    margin-left: auto;
    align-self: stretch;
    display: flex;
    align-items: center;
    gap: 9px;
}
.tray time {
    margin: 0 3px 0 8px;
}
.peek {
    width: 14px;
    height: 100%;
    border: 1px solid #8ca9d2;
    background: linear-gradient(135deg, #8ca6ca, #2c4f86);
}

/* 消息提示 */
.notice {
    position: absolute;
    right: 0;
    bottom: 30px;
    z-index: 5;
    width: 271px;
    height: 150px;
    display: flex;
    flex-direction: column;
    padding: 0 2px;
    border: 1px solid #8ba3c7;
    background: linear-gradient(#eef5fd, #dfe9f4 60%, #dbe5ef);
}
.notice-head {
    flex: none;
    height: 38px;
    display: flex;
    gap: 7px;
    padding: 5px 2px 0 16px;
}
.notice-head h2 {
    margin: 13px auto 0 0;
    color: #1f3a7d;
}
.notice-head button {
    width: 12px;
    height: 12px;
    display: flex;
    align-items: center;
    justify-content: center;
}
.n-min {
    background: linear-gradient(#fff, #fff) center / 6px 2px no-repeat #2a6ad0;
}
.n-close {
    background-color: #d0502c;
}
.notice-body {
    flex: none;
    height: 68px;
    background-color: #d9e9fd;
    color: #153e70;
}
.notice strong {
    align-self: flex-end;
    margin: 2px 87px 2px 0;
    color: #1f3a7d;
}
.notice-foot {
    display: flex;
    gap: 16px;
    padding: 1px 6px 0 7px;
}
.notice-foot .next {
    margin-left: auto;
}
.notice-foot button:last-child {
    margin-left: -6px;
}
.notice-foot button:disabled {
    color: #8d9197;
}
```
